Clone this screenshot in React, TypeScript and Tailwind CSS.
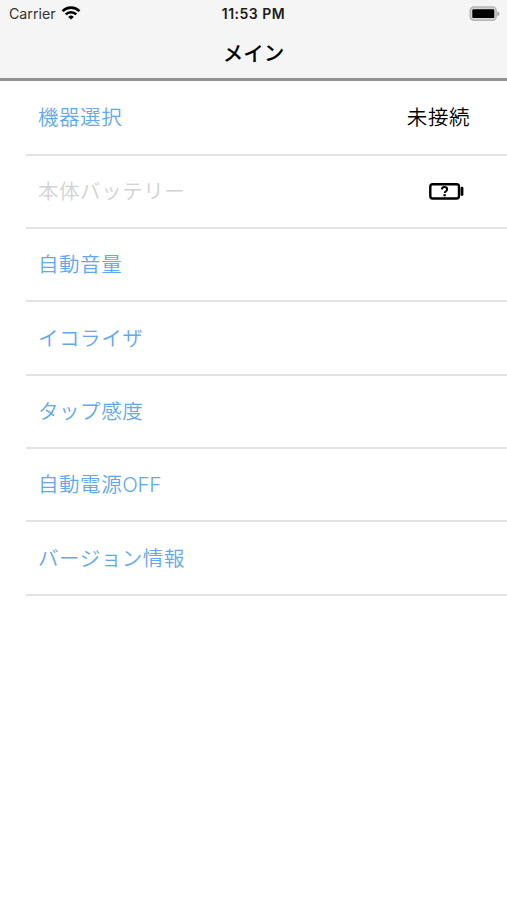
import clsx from 'clsx'

type MenuItem = {
  label: string
  suffix?: string
  disabled?: boolean
  value?: string
  battery?: boolean
}

const items: MenuItem[] = [
  { label: '機器選択', value: '未接続' },
  { label: '本体バッテリー', disabled: true, battery: true },
  { label: '自動音量' },
  { label: 'イコライザ' },
  { label: 'タップ感度' },
  { label: '自動電源', suffix: 'OFF' },
  { label: 'バージョン情報' },
]

function WifiIcon() {
  return (
    <svg width="20" height="16" viewBox="0 0 20 16" fill="none" stroke="#000" strokeWidth="2.7">
      <path d="M1.6 6.1a12 12 0 0 1 16.8 0" />
      <path d="M4.7 9.4a7.6 7.6 0 0 1 10.6 0" />
      <path d="M10 14.6l-2.8-2.7a4 4 0 0 1 5.6 0z" fill="#000" stroke="none" />
    </svg>
  )
}

function StatusBattery() {
  return (
    <svg width="31" height="16" viewBox="0 0 31 16">
      <rect x="1.2" y="1" width="26" height="13.2" rx="3.6" fill="#d4d4d4" stroke="#b5b5b5" strokeWidth="1.4" />
      <rect x="3.3" y="3.3" width="22" height="8.8" rx="1.2" fill="#000" />
      <path d="M28.2 5.2c1.5.5 2.3 1.3 2.3 2.5s-.8 2-2.3 2.5z" fill="#a8a8a8" />
    </svg>
  )
}

function UnknownBattery() {
  return (
    <svg width="35" height="17" viewBox="0 0 35 17" fill="none" stroke="#000">
      <rect x="1.3" y="1.3" width="28.7" height="14.2" rx="2.4" strokeWidth="2.4" />
      <path d="M33 5.2v6.4" strokeWidth="2.8" strokeLinecap="round" />
      <path d="M12.9 6.4c.1-1.5 1.1-2.3 2.6-2.3s2.6.9 2.6 2.3c0 1.9-2.4 1.7-2.4 3.5" strokeWidth="2" />
      <path d="M15.6 11.1v2.2" strokeWidth="2.3" />
    </svg>
  )
}

function MenuRow({ item }: { item: MenuItem }) {
  return (
    <li className="flex h-[73.35px] items-center justify-between border-b-2 border-[#e3e3e3] pl-3 pr-[37px] pt-[2px] text-[20.5px] tracking-[0.55px]">
      <span className={clsx('font-[350]', item.disabled ? 'text-[#d2d2d2]' : 'text-[#62a8f0]')}>
        {item.label}
        {item.suffix && <span className="tracking-[-0.3px]">{item.suffix}</span>}
      </span>
      {item.value && <span className="font-[350] text-black">{item.value}</span>}
      {item.battery && (
        <span className="mr-[6px] pb-[2px]">
          <UnknownBattery />
        </span>
      )}
    </li>
  )
}

export default function App() {
  return (
    <div className="min-h-[900px] w-full bg-white font-['Inter','Noto_Sans_CJK_JP',sans-serif]">
      <header className="flex h-[81px] flex-col border-b-[3px] border-[#929292] bg-[#f5f5f5]">
        {/* Status bar */}
        <div className="grid h-[27px] grid-cols-3 items-center">
          <div className="flex items-center gap-[5px] pl-[9px] text-[14.2px] text-[#333]">
            <span>Carrier</span>
            <WifiIcon />
          </div>
          <span className="pb-px text-center text-[14px] font-semibold tracking-[0.5px] text-[#1c1c1c]">11:53 PM</span>
          <div className="flex justify-end pr-[7px]">
            <StatusBattery />
          </div>
        </div>
        <h1 className="flex flex-1 items-center justify-center pt-[3px] text-[20.5px] font-medium text-black">メイン</h1>
      </header>

      {/* Menu */}
      <ul className="ml-[26px] pt-[1.2px]">
        {items.map((item) => (
          <MenuRow key={item.label} item={item} />
        ))}
      </ul>
    </div>
  )
}
